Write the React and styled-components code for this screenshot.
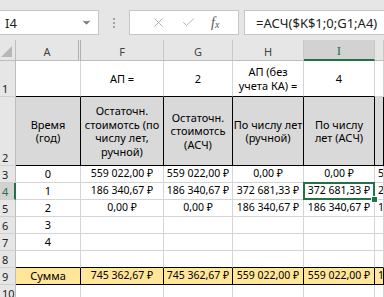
import React from 'react'
import styled, { createGlobalStyle, css } from 'styled-components'
import { X, Check, ChevronDown } from 'lucide-react'

const GlobalStyle = createGlobalStyle`
  html, body {
    margin: 0;
    padding: 0;
    background: #ffffff;
    overflow: hidden;
  }
  body {
    font-family: 'Noto Sans', 'Open Sans', sans-serif;
  }
`

const GREEN = '#217346'

const Window = styled.div`
  width: 384px;
  height: 297px;
  overflow: hidden;
  display: flex;
  flex-direction: column;
  background: #ffffff;
`

const FormulaBar = styled.div`
  display: flex;
  align-items: flex-start;
  height: 40px;
  box-sizing: border-box;
  padding-top: 10px;
  background: #e6e6e6;
  flex-shrink: 0;
`

const NameBox = styled.div`
  width: 100px;
  height: 25px;
  margin-left: -1px;
  box-sizing: border-box;
  background: #ffffff;
  border: 1px solid #c6c6c6;
  display: flex;
  align-items: center;
  justify-content: space-between;
  padding: 0 6px 0 5px;
  font-size: 13px;
  color: #222;
`

const Grip = styled.div`
  width: 30px;
  height: 25px;
  display: flex;
  flex-direction: column;
  align-items: center;
  justify-content: center;
  gap: 2px;

  span {
    width: 2px;
    height: 2px;
    background: #a0a0a0;
  }
`

const ButtonGroup = styled.div`
  width: 110px;
  height: 25px;
  box-sizing: border-box;
  background: #ffffff;
  border: 1px solid #c6c6c6;
  display: flex;
  align-items: center;
  padding-left: 13px;
`

const ToolButton = styled.div`
  width: 30px;
  display: flex;
  justify-content: center;
  color: #a8a8a8;
`

const Fx = styled.div`
  font-family: 'Liberation Serif', 'DejaVu Serif', serif;
  font-style: italic;
  font-size: 14px;
  color: #555;
  margin-left: 8px;

  sub {
    font-size: 10px;
    vertical-align: -1px;
  }
`

const FormulaInput = styled.div`
  flex: 1;
  height: 25px;
  margin-left: 5px;
  box-sizing: border-box;
  background: #ffffff;
  border: 1px solid #c6c6c6;
  border-right: none;
  display: flex;
  align-items: center;
  padding-left: 11px;
  font-size: 13px;
  color: #222;
  white-space: nowrap;
`

const Sheet = styled.div`
  display: grid;
  grid-template-columns: 16px 65px 83px 69px 71px 71px 1fr;
  grid-template-rows: 21px 36px 69px repeat(8, 17px);
  font-size: 11px;
  color: #000;
`

const Corner = styled.div`
  background: #e6e6e6;
  border-right: 1px solid #bdbdbd;
  border-bottom: 1px solid #bdbdbd;
  position: relative;

  &::after {
    content: '';
    position: absolute;
    right: 3px;
    bottom: 3px;
    border-style: solid;
    border-width: 0 0 11px 11px;
    border-color: transparent transparent #b7b7b7 transparent;
  }
`

const ColHead = styled.div`
  background: ${({ $active }) => ($active ? '#d2d2d2' : '#e6e6e6')};
  color: ${({ $active }) => ($active ? GREEN : '#444')};
  border-right: ${({ $hidden }) => ($hidden ? '3px double #b0b0b0' : '1px solid #c8c8c8')};
  border-bottom: ${({ $active }) => ($active ? `2px solid ${GREEN}` : '1px solid #bdbdbd')};
  box-sizing: border-box;
  display: flex;
  align-items: center;
  justify-content: center;
  font-family: ${({ $active }) => ($active ? "'Liberation Serif', serif" : "'Noto Sans', sans-serif")};
  font-size: ${({ $active }) => ($active ? '13px' : '11px')};
  padding-top: 2px;
`

const RowHead = styled.div`
  background: ${({ $active }) => ($active ? '#d2d2d2' : '#e6e6e6')};
  color: ${({ $active }) => ($active ? GREEN : '#222')};
  border-right: ${({ $active }) => ($active ? `2px solid ${GREEN}` : '1px solid #bdbdbd')};
  border-bottom: 1px solid #d0d0d0;
  box-sizing: border-box;
  display: flex;
  align-items: flex-end;
  padding: 0 0 0 2px;
  font-size: 11px;
  line-height: 15px;
`

const tones = {
  plain: css`
    background: #ffffff;
    border-right: 1px solid #d4d4d4;
    border-bottom: 1px solid #d4d4d4;
  `,
  above: css`
    background: #ffffff;
    border-right: 1px solid #d4d4d4;
    border-bottom: 1px solid #000;
  `,
  head: css`
    background: #d9d9d9;
    border-right: 1px solid #000;
    border-bottom: 1px solid #000;
  `,
  total: css`
    background: #ffe699;
    border-right: 1px solid #000;
    border-bottom: 1px solid #000;
  `,
}

const Cell = styled.div`
  box-sizing: border-box;
  display: flex;
  align-items: center;
  justify-content: ${({ $left }) => ($left ? 'flex-start' : 'center')};
  text-align: center;
  padding: ${({ $left }) => ($left ? '0 0 0 3px' : '0 2px')};
  font-size: ${({ $num }) => ($num ? '10.5px' : '11px')};
  line-height: 13.5px;
  white-space: nowrap;
  overflow: ${({ $left }) => ($left ? 'hidden' : 'visible')};
  position: relative;
  ${({ $tone }) => tones[$tone]}

  ${({ $selected }) =>
    $selected &&
    css`
      z-index: 2;
      &::after {
        content: '';
        position: absolute;
        left: -1px;
        top: -1px;
        right: -1px;
        bottom: -1px;
        border: 2px solid ${GREEN};
      }
      &::before {
        content: '';
        position: absolute;
        right: -4px;
        bottom: -4px;
        width: 5px;
        height: 5px;
        background: ${GREEN};
        border: 1px solid #fff;
        z-index: 3;
      }
    `}
`

const Lines = styled.div`
  display: flex;
  flex-direction: column;
  align-items: center;
`

const columns = ['A', 'F', 'G', 'H', 'I', '']

const rows = [
  {
    n: 1,
    h: ['', 'АП =', '2', ['АП (без', 'учета КА) ='], '4', ''],
    tone: 'above',
  },
  {
    n: 2,
    h: [
      ['Время', '(год)'],
      ['Остаточн.', 'стоимотсь (по', 'числу лет,', 'ручной)'],
      ['Остаточн.', 'стоимотсь', '(АСЧ)'],
      ['По числу лет', '(ручной)'],
      ['По числу', 'лет (АСЧ)'],
      '',
    ],
    tone: 'head',
  },
  { n: 3, h: ['0', '559 022,00 ₽', '559 022,00 ₽', '0,00 ₽', '0,00 ₽', '559 022,00 ₽'], tone: 'plain' },
  { n: 4, h: ['1', '186 340,67 ₽', '186 340,67 ₽', '372 681,33 ₽', '372 681,33 ₽', '248 454,22 ₽'], tone: 'plain' },
  { n: 5, h: ['2', '0,00 ₽', '0,00 ₽', '186 340,67 ₽', '186 340,67 ₽', '124 227,11 ₽'], tone: 'plain' },
  { n: 6, h: ['3', '', '', '', '', ''], tone: 'plain' },
  { n: 7, h: ['4', '', '', '', '', ''], tone: 'plain' },
  { n: 8, h: ['', '', '', '', '', ''], tone: 'above' },
  {
    n: 9,
    h: ['Сумма', '745 362,67 ₽', '745 362,67 ₽', '559 022,00 ₽', '559 022,00 ₽', '1 490 725,33 ₽'],
    tone: 'total',
  },
  { n: 10, h: ['', '', '', '', '', ''], tone: 'plain' },
]

const renderText = (value) =>
  Array.isArray(value) ? (
    <Lines>
      {value.map((line) => (
        <span key={line}>{line}</span>
      ))}
    </Lines>
  ) : (
    value
  )

const App = () => {
  return (
    <Window>
      <GlobalStyle />
      <FormulaBar>
        <NameBox>
          <span>I4</span>
          <ChevronDown size={11} color="#777" strokeWidth={2.5} fill="#777" />
        </NameBox>
        <Grip>
          <span />
          <span />
          <span />
        </Grip>
        <ButtonGroup>
          <ToolButton>
            <X size={15} strokeWidth={1.4} />
          </ToolButton>
          <ToolButton>
            <Check size={15} strokeWidth={1.4} />
          </ToolButton>
          <Fx>
            f<sub>x</sub>
          </Fx>
        </ButtonGroup>
        <FormulaInput>=АСЧ($K$1;0;G1;A4)</FormulaInput>
      </FormulaBar>

      <Sheet>
        <Corner />
        {columns.map((c, i) => (
          <ColHead key={i} $active={c === 'I'} $hidden={c === 'A'}>
            {c}
          </ColHead>
        ))}

        {rows.map((row) => (
          <React.Fragment key={row.n}>
            <RowHead $active={row.n === 4}>{row.n}</RowHead>
            {row.h.map((value, i) => (
              <Cell
                key={i}
                $tone={row.tone === 'above' && i === 5 && row.n === 1 ? 'plain' : row.tone}
                $left={i === 5}
                $num={typeof value === 'string' && value.includes('₽')}
                $selected={row.n === 4 && i === 4}
              >
                {renderText(value)}
              </Cell>
            ))}
          </React.Fragment>
        ))}
      </Sheet>
    </Window>
  )
}

export default App
